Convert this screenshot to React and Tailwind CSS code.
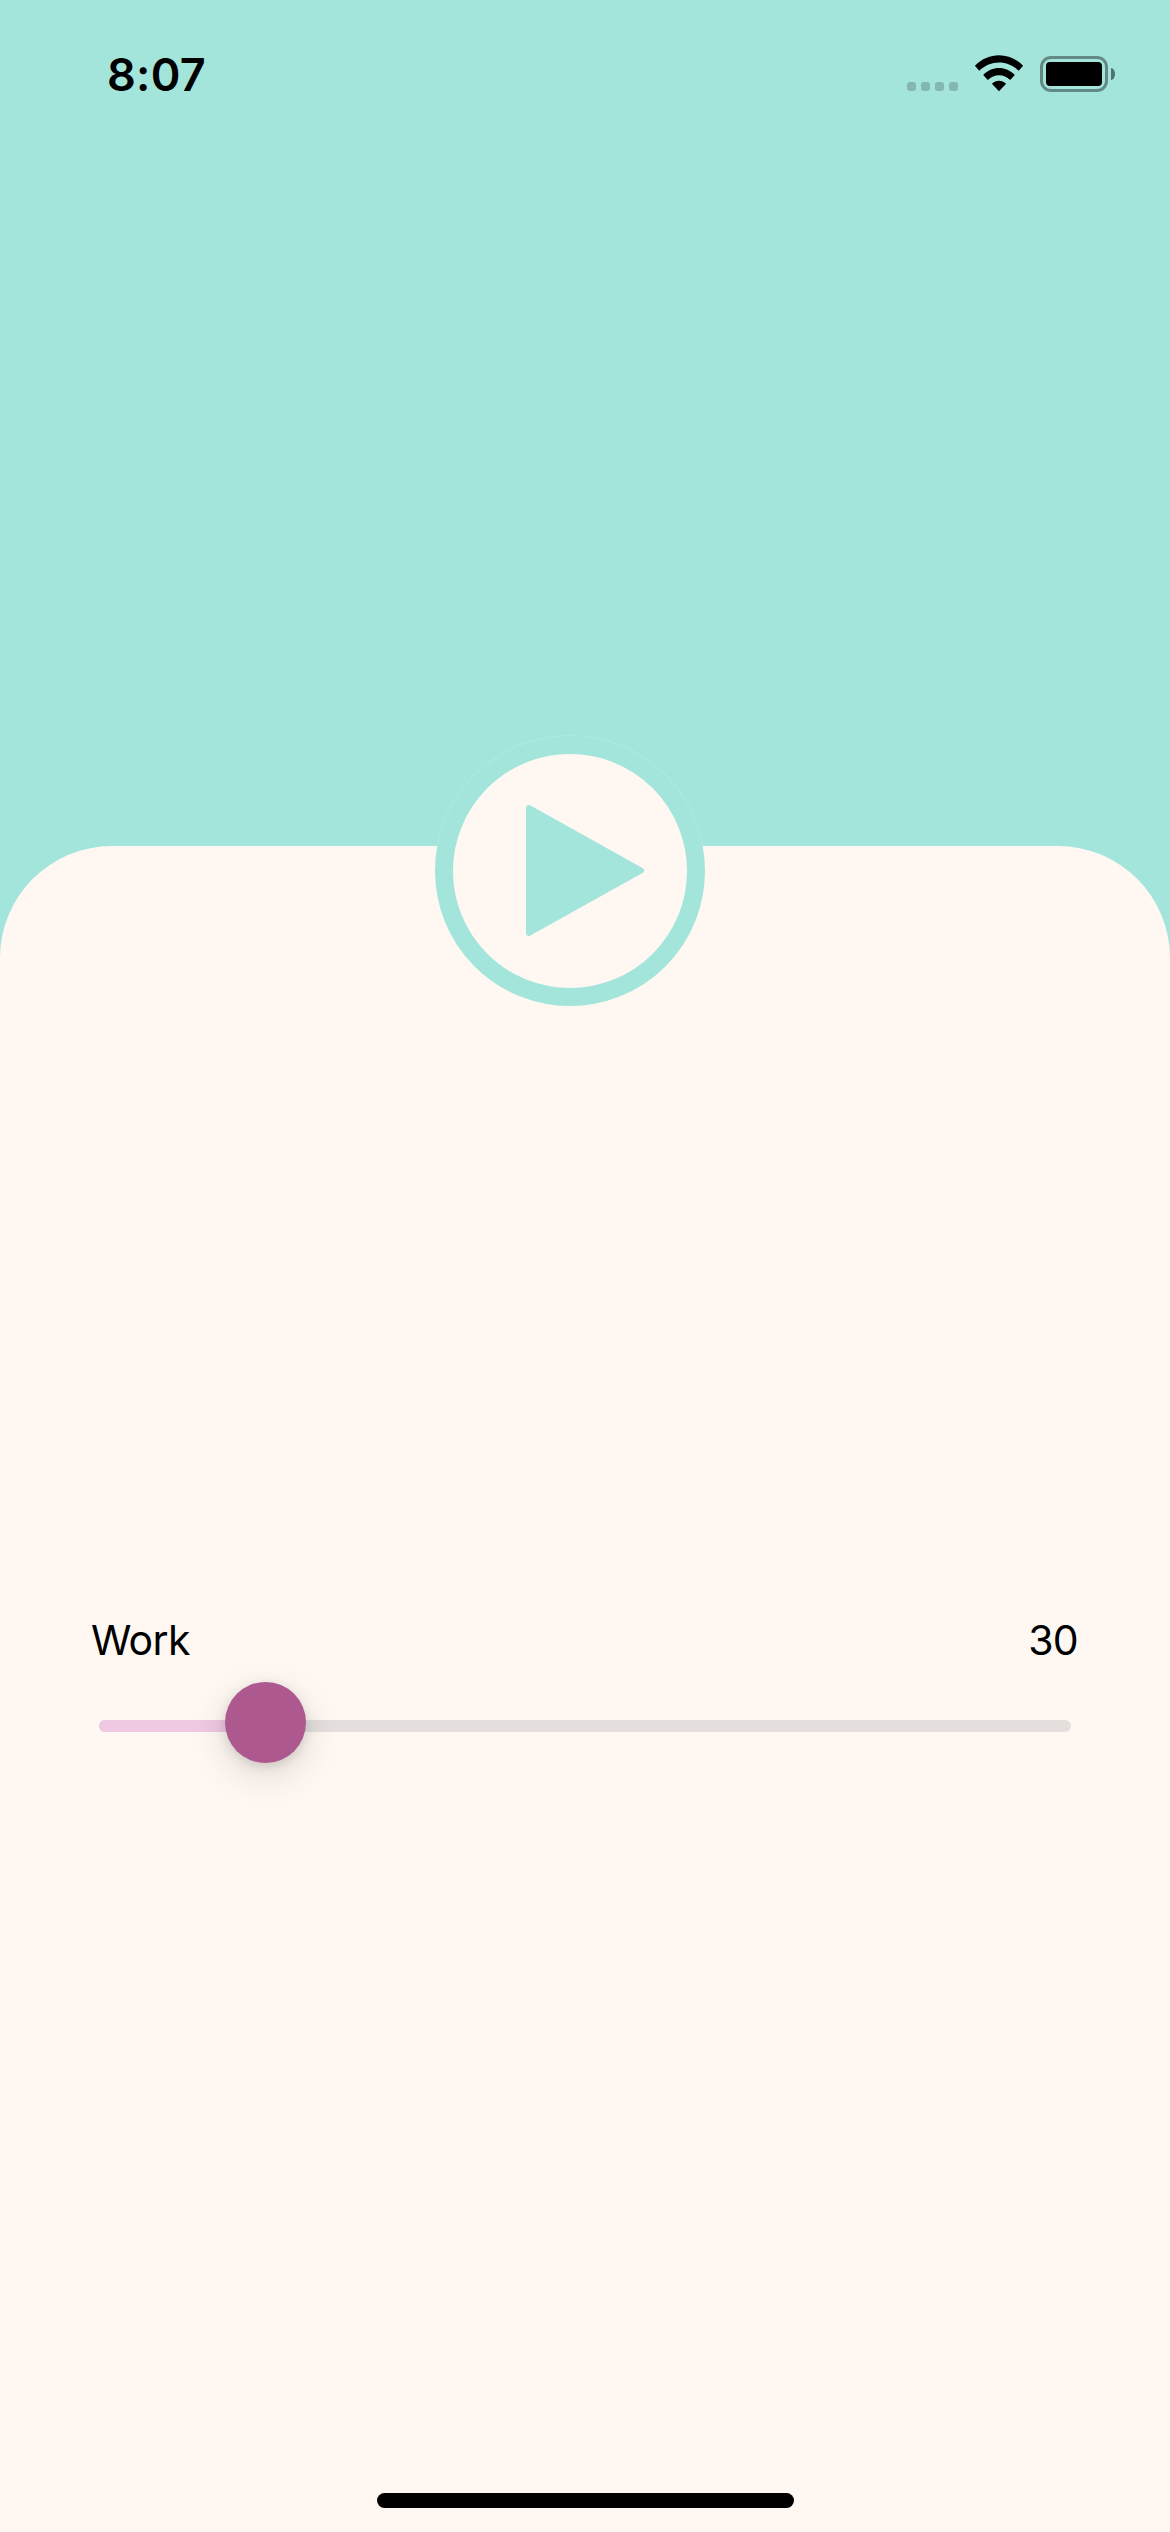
function StatusBar() {
  return (
    <header className="flex h-[141px] items-start justify-between pl-[107px] pr-[55px] pt-[48px]">
      <span className="h-[54px] text-[45px] font-semibold leading-[54px] tracking-[0.3px]">8:07</span>
      <div className="mt-[7px] flex h-[37px] items-start">
        <div className="mt-[27px] flex gap-[5px]">
          <i className="size-[9px] rounded-[3px] bg-black/20" />
          <i className="size-[9px] rounded-[3px] bg-black/20" />
          <i className="size-[9px] rounded-[3px] bg-black/20" />
          <i className="size-[9px] rounded-[3px] bg-black/20" />
        </div>
        <svg className="ml-[16px]" width="50" height="37" viewBox="0 0 50 37">
          <path d="M.9 10.7C14.4-3.3 35.6-3.3 49.1 10.7L44.7 15.8C33.5 4.8 16.5 4.8 5.3 15.8Z" />
          <path d="M9.2 20C18 10.7 32 10.7 40.8 20L36.2 25C30 18.7 20 18.7 13.8 25Z" />
          <path d="M17.9 28.8C21.8 24.6 28.2 24.6 32.1 28.8L25 36.2Z" />
        </svg>
        <div className="ml-[16px] mt-[1px] h-[36px] w-[68px] rounded-[11px] border-[3px] border-black/40 p-[3px]">
          <div className="h-full rounded-[4px] bg-black" />
        </div>
        <div className="ml-[3px] mt-[13px] h-[12px] w-[4px] rounded-[0_100%_100%_0/0_50%_50%_0] bg-black/50" />
      </div>
    </header>
  );
}

function PlayButton() {
  return (
    <button
      aria-label="Play"
      className="absolute left-[435px] top-[-110px] flex size-[270px] items-center justify-center rounded-full border-[18px] border-[#a4e5db] bg-[#fff8f2] shadow-[0_0_0_1px_rgba(255,248,242,0.15)]"
    >
      <svg width="234" height="234" viewBox="0 0 234 234">
        <path
          d="M76 54L188 116.5L76 179Z"
          fill="#a4e5db"
          stroke="#a4e5db"
          strokeWidth="6"
          strokeLinejoin="round"
        />
      </svg>
    </button>
  );
}

function WorkSlider() {
  return (
    <section className="pt-[769px]">
      <div className="flex h-[51px] items-center justify-between pl-[91px] pr-[92px] text-[41px] leading-[51px] tracking-[-0.7px]">
        <span>Work</span>
        <span>30</span>
      </div>
      <div className="relative mx-[99px] mt-[54px] h-[12px] rounded-full bg-[#e4dfdc]">
        <div className="h-full w-[167px] rounded-full bg-[#efc8e2]" />
        <div className="absolute left-[126px] top-[-38px] size-[81px] rounded-full bg-[#ad5990] shadow-[0_12px_39px_rgba(0,0,0,0.13),0_3px_12px_rgba(0,0,0,0.13)]" />
      </div>
    </section>
  );
}

export default function App() {
  return (
    <div className="flex h-[2532px] w-[1170px] flex-col overflow-hidden bg-[#a4e5db] font-['Inter',sans-serif] text-black">
      <StatusBar />
      <main className="relative mt-[705px] flex flex-1 flex-col rounded-t-[112px] bg-[#fff8f2]">
        <PlayButton />
        <WorkSlider />
        <div className="mx-auto mb-[24px] mt-auto h-[15px] w-[417px] rounded-full bg-black" />
      </main>
    </div>
  );
}
